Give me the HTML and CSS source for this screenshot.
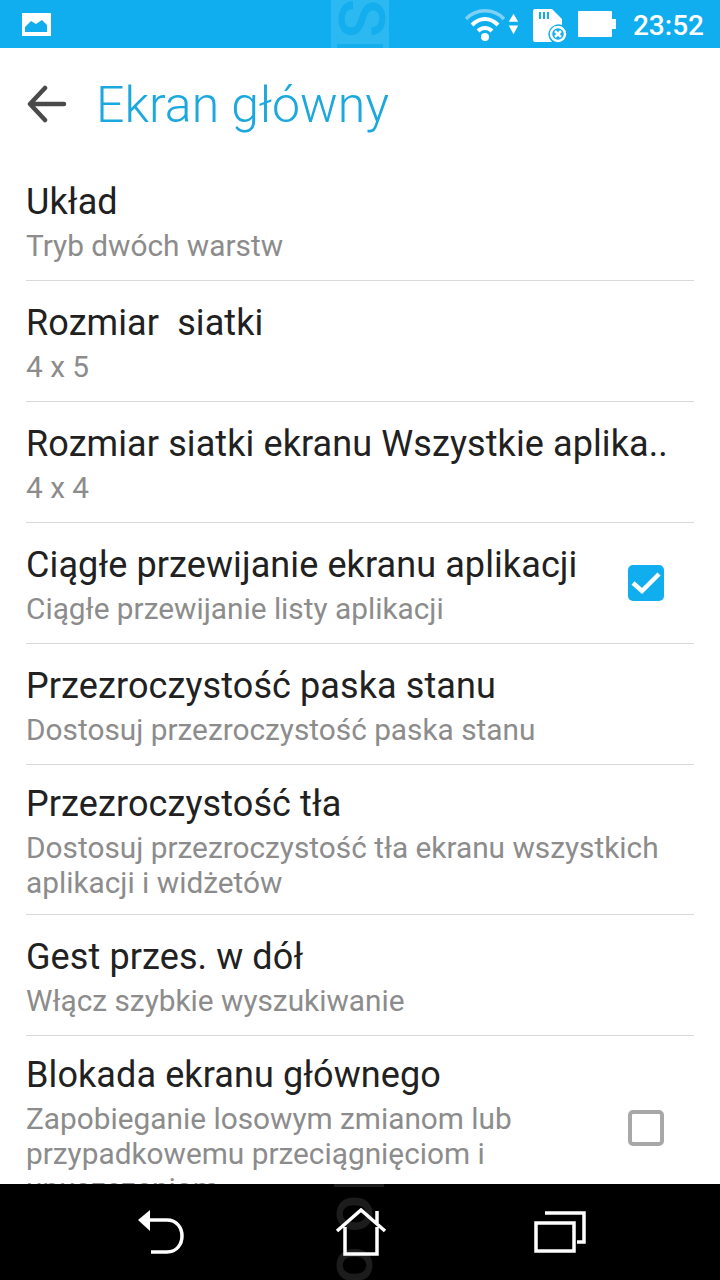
FILE: index.html
```html
<!DOCTYPE html>
<html lang="pl">
<head>
    <meta charset="UTF-8">
    <meta name="viewport" content="width=device-width, initial-scale=1.0">
    <title>Ekran główny</title>
    <link rel="stylesheet" href="styles.css">
</head>
<body>
    <div class="phone">
        <div class="status-bar">
            <svg class="status-pic" width="30" height="25" viewBox="0 0 30 25">
                <path fill="#fff" d="M1 1h29v23H1z"/>
                <path fill="#10aeef" d="M4 20v-5l6-6 5 3 6-4 5 5v7z"/>
            </svg>
            <div class="status-watermark"><span>S</span><div class="status-watermark-bar"></div></div>
            <div class="status-right">
                <svg class="status-wifi" width="40" height="40" viewBox="0 0 40 40">
                    <path fill="none" stroke="#7fd0f3" stroke-width="3.5" d="M1 15C11 4 29 4 39 15"/>
                    <path fill="none" stroke="#fff" stroke-width="4" d="M7 21c8-8 18-8 26 0M13 27c4-4 10-4 14 0"/>
                    <circle cx="20" cy="33" r="4" fill="#fff"/>
                </svg>
                <svg class="status-updown" width="11" height="26" viewBox="0 0 14 28">
                    <path fill="#fff" d="M7 1l6 10H1zM1 16h12L7 27z"/>
                </svg>
                <svg class="status-sd" width="36" height="34" viewBox="0 0 36 34">
                    <path fill="#fff" d="M3 0h17l10 10v6a10 10 0 0 0-10 17H3a2 2 0 0 1-2-2V2a2 2 0 0 1 2-2z"/>
                    <path fill="#10aeef" d="M7 3h2v7H7zM11 3h2v7h-2zM15 3h2v7h-2z"/>
                    <circle cx="26" cy="25" r="7" fill="none" stroke="#fff" stroke-width="2.5"/>
                    <path stroke="#fff" stroke-width="2.5" d="M23 22l6 6M29 22l-6 6"/>
                </svg>
                <svg class="status-battery" width="40" height="26" viewBox="0 0 40 26">
                    <path fill="#fff" d="M1 0h32a1 1 0 0 1 1 1v7h4v10h-4v7a1 1 0 0 1-1 1H1a1 1 0 0 1-1-1V1a1 1 0 0 1 1-1z"/>
                </svg>
                <span class="status-time">23:52</span>
            </div>
        </div>

        <div class="header">
            <svg class="back" width="40" height="38" viewBox="0 0 40 38">
                <path fill="none" stroke="#4a4a4a" stroke-width="4.5" stroke-linecap="round" stroke-linejoin="round" d="M37 19H4M18 3L3 19l15 16"/>
            </svg>
            <h1>Ekran główny</h1>
        </div>

        <div class="list">
            <div class="row">
                <div class="row-text">
                    <div class="row-title">Układ</div>
                    <div class="row-sub">Tryb dwóch warstw</div>
                </div>
            </div>
            <div class="row">
                <div class="row-text">
                    <div class="row-title">Rozmiar&nbsp; siatki</div>
                    <div class="row-sub">4 x 5</div>
                </div>
            </div>
            <div class="row">
                <div class="row-text">
                    <div class="row-title">Rozmiar siatki ekranu Wszystkie aplika..</div>
                    <div class="row-sub">4 x 4</div>
                </div>
            </div>
            <div class="row">
                <div class="row-text">
                    <div class="row-title">Ciągłe przewijanie ekranu aplikacji</div>
                    <div class="row-sub">Ciągłe przewijanie listy aplikacji</div>
                </div>
                <div class="check checked">
                    <svg width="36" height="36" viewBox="0 0 36 36">
                        <path fill="none" stroke="#fff" stroke-width="4.5" d="M5 18l9 8L31 9"/>
                    </svg>
                </div>
            </div>
            <div class="row">
                <div class="row-text">
                    <div class="row-title">Przezroczystość paska stanu</div>
                    <div class="row-sub">Dostosuj przezroczystość paska stanu</div>
                </div>
            </div>
            <div class="row row-tall">
                <div class="row-text">
                    <div class="row-title">Przezroczystość tła</div>
                    <div class="row-sub">Dostosuj przezroczystość tła ekranu wszystkich aplikacji i widżetów</div>
                </div>
            </div>
            <div class="row">
                <div class="row-text">
                    <div class="row-title">Gest przes. w dół</div>
                    <div class="row-sub">Włącz szybkie wyszukiwanie</div>
                </div>
            </div>
            <div class="row row-last">
                <div class="row-text">
                    <div class="row-title">Blokada ekranu głównego</div>
                    <div class="row-sub">Zapobieganie losowym zmianom lub przypadkowemu przeciągnięciom i upuszczaniom</div>
                </div>
                <div class="check"></div>
            </div>
        </div>

        <div class="nav-bar">
            <div class="nav-watermark"><span>oo</span></div>
            <svg class="nav-icon" width="50" height="46" viewBox="0 0 50 46">
                <path fill="#fff" d="M1 11L13 1v21z"/>
                <path fill="none" stroke="#fff" stroke-width="3.5" d="M12 11h18c20 0 20 32 0 32H14"/>
            </svg>
            <svg class="nav-icon" width="52" height="48" viewBox="0 0 52 48">
                <path fill="none" stroke="#fff" stroke-width="3.5" d="M2 23L26 2l24 21M42 15V3M10 19v27h32V19"/>
            </svg>
            <svg class="nav-icon" width="52" height="42" viewBox="0 0 52 42">
                <path fill="none" stroke="#fff" stroke-width="3.5" d="M11 2h39v29h-7M2 12h38v28H2z"/>
            </svg>
        </div>
    </div>
</body>
</html>
```

FILE: styles.css
```css
* {
    margin: 0;
    padding: 0;
    box-sizing: border-box;
    font-family: Roboto, "Liberation Sans", sans-serif;
}

body {
    background: white;
}

.phone {
    width: 720px;
    height: 1280px;
    display: flex;
    flex-direction: column;
    overflow: hidden;
}

.status-bar {
    position: relative;
    height: 48px;
    flex-shrink: 0;
    background: #10aeef;
    display: flex;
    align-items: center;
    justify-content: space-between;
    padding: 0 16px 0 21px;
}

.status-pic {
    display: block;
}

.status-watermark {
    position: absolute;
    top: 0;
    left: 331px;
    width: 58px;
    height: 48px;
    background: #2cb8f1;
    overflow: hidden;
    display: flex;
    justify-content: center;
}

.status-watermark span {
    font-size: 64px;
    font-weight: 500;
    line-height: 36px;
    height: 36px;
    color: #14aeee;
    transform: rotate(90deg);
}

.status-watermark-bar {
    position: absolute;
    left: 6px;
    bottom: 0;
    width: 46px;
    height: 4px;
    background: #14aeee;
}

.status-right {
    display: flex;
    align-items: center;
}

.status-updown {
    margin-left: 3px;
}

.status-sd {
    margin-left: 13px;
    margin-top: 4px;
}

.status-battery {
    margin-left: 10px;
}

.status-time {
    margin-left: 15px;
    margin-top: 3px;
    color: white;
    font-size: 28px;
    font-weight: 500;
}

.header {
    height: 112px;
    flex-shrink: 0;
    display: flex;
    align-items: center;
    padding-left: 27px;
}

.back {
    display: block;
    margin-right: 29px;
}

h1 {
    font-size: 50px;
    font-weight: 300;
    color: #1ba8de;
    margin-top: 2px;
}

.list {
    flex: 1;
    overflow: hidden;
    padding: 0 26px;
}

.row {
    height: 121px;
    display: flex;
    align-items: flex-start;
    justify-content: space-between;
    padding-top: 20px;
    border-bottom: 1px solid #d9d9d9;
}

.row-tall {
    height: 150px;
    padding-top: 17px;
}

.row-last {
    height: 170px;
    padding-top: 17px;
    border-bottom: none;
}

.row-text {
    flex: 1;
    min-width: 0;
}

.row-title {
    font-size: 36px;
    line-height: 44px;
    letter-spacing: 0.1px;
    color: #212121;
    white-space: nowrap;
}

.row-sub {
    font-size: 29.8px;
    line-height: 35px;
    color: #8c8c8c;
    margin-top: 4px;
    width: 650px;
}

.row-last .row-sub {
    width: 570px;
}

.check {
    width: 36px;
    height: 36px;
    flex-shrink: 0;
    margin: 22px 30px 0 0;
    border: 4px solid #a8a8a8;
    border-radius: 5px;
}

.row-last .check {
    margin-top: 57px;
}

.check.checked {
    background: #10aeef;
    border: none;
}

.check svg {
    display: block;
}

.nav-bar {
    position: relative;
    height: 96px;
    flex-shrink: 0;
    background: black;
    display: flex;
    align-items: center;
    justify-content: space-between;
    padding: 0 134px 0 137px;
}

.nav-watermark {
    position: absolute;
    top: 0;
    left: 334px;
    width: 50px;
    height: 96px;
    overflow: hidden;
    border-top: 3px solid #1c1c1c;
    display: flex;
    justify-content: center;
    padding-top: 8px;
}

.nav-watermark span {
    writing-mode: vertical-rl;
    font-size: 66px;
    font-weight: 500;
    line-height: 50px;
    letter-spacing: 14px;
    color: #1c1c1c;
}

.nav-icon {
    position: relative;
    display: block;
}
```
